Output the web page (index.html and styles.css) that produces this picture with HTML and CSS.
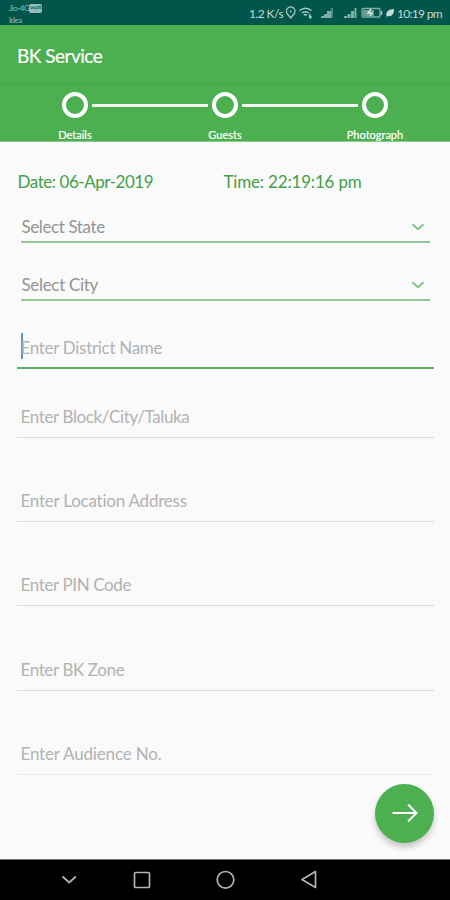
FILE: index.html
```html
<!DOCTYPE html>
<html lang="en">
<head>
<meta charset="utf-8">
<title>BK Service</title>
<link rel="stylesheet" href="styles.css">
</head>
<body>
<div class="screen">
  <header class="status">
    <div class="carriers">
      <div class="carrier"><span>Jio-4G</span><span class="volte">VoLTE</span></div>
      <div class="carrier">Idea</div>
    </div>
    <div class="indicators">
      <span class="speed">1.2 K/s</span>
      <svg class="glyphs" width="110" height="14" viewBox="0 0 110 14" fill="none" stroke="#a9cbc5" stroke-width="1.3">
        <path d="M5.700 12 2.400 8A4.300 4.300 0 1 1 9 8Z"/><circle cx="5.700" cy="5.400" r="1" fill="#a9cbc5" stroke="none"/>
        <path d="M14.500 4.500Q20.500-.2 26.500 4.500M17 7Q20.500 4.300 24 7M18.800 9.100Q20.500 8 22 9.100M20.500 11h.1M24.800 8v4.500M26.400 10.200l-1.600 2.300" stroke-width="1.500"/>
        <g fill="#81afa7" stroke="none">
          <path d="M36 10h3v2h-3zM39 8h3v4h-3zM42 5h4v7h-4z"/><path d="M46 2h2v10h-2z" opacity=".6"/>
          <path d="M59 10h3v2h-3zM62.500 8h3v4h-3zM66 5h3v7h-3zM69.500 2h2v10h-2z"/>
        </g>
        <rect x="77" y="2.500" width="18" height="8.500" rx="1" stroke="#81afa7"/><path d="M78 4h11v6H78z" fill="#6b9f96" stroke="none"/><path d="M96.500 5v4" stroke-width="1.500"/>
        <path d="m86 3-3 4h4l-2 3" stroke="#dce9e7"/>
        <path d="M101.500 10C100.500 5 104 3.500 109 3c0 5-2 8-6.500 7l-1.500 1.500" fill="#c3dad6" stroke="none"/>
      </svg>
      <span class="clock">10:19 pm</span>
    </div>
  </header>

  <div class="appbar"><h1>BK Service</h1></div>

  <nav class="steps">
    <div class="step"><div class="track"><i></i><b></b><i class="line"></i></div><span>Details</span></div>
    <div class="step"><div class="track"><i class="line"></i><b></b><i class="line"></i></div><span>Guests</span></div>
    <div class="step"><div class="track"><i class="line"></i><b></b><i></i></div><span>Photograph</span></div>
  </nav>

  <main class="form">
    <div class="stamp"><span class="date">Date: 06-Apr-2019</span><span class="time">Time: 22:19:16 pm</span></div>
    <div class="select"><span class="t-state">Select State</span><svg width="14" height="10" viewBox="0 0 14 10"><path d="m1.500 2.200 5.500 5 5.500-5"/></svg></div>
    <div class="select second"><span class="t-city">Select City</span><svg width="14" height="10" viewBox="0 0 14 10"><path d="m1.500 2.200 5.500 5 5.500-5"/></svg></div>
    <div class="field focused"><i class="caret"></i><span class="t-district">Enter District Name</span></div>
    <div class="field block"><span class="t-block">Enter Block/City/Taluka</span></div>
    <div class="field"><span class="t-location">Enter Location Address</span></div>
    <div class="field"><span class="t-pin">Enter PIN Code</span></div>
    <div class="field"><span class="t-zone">Enter BK Zone</span></div>
    <div class="field last"><span class="t-audience">Enter Audience No.</span></div>
    <button class="fab" aria-label="Next"><svg width="28" height="24" viewBox="0 0 28 24"><path d="M1.500 12h24M17 3.500l8.500 8.500-8.500 8.500"/></svg></button>
  </main>

  <footer class="navbar">
    <svg width="450" height="41" viewBox="0 0 450 41" fill="none" stroke="#b4b4b4" stroke-width="1.700">
      <path d="m62.500 17.500 6.700 6 6.700-6"/>
      <rect x="134.500" y="13.500" width="15" height="15" rx="1"/>
      <circle cx="225.500" cy="20.800" r="8.300"/>
      <path d="m302 20.500 13.500-8v16Z" stroke-linejoin="round"/>
    </svg>
  </footer>
</div>
</body>
</html>
```
FILE: styles.css
```css
* { box-sizing: border-box; }
body { margin: 0; font-family: Lato, sans-serif; background: #fafafa; }
.screen { width: 450px; height: 900px; display: flex; flex-direction: column; overflow: hidden; background: #fafafa; }
.status { height: 25px; flex: none; background: #00564a; display: flex; justify-content: space-between; padding: 2px 8px 0 9px; color: #a9cbc5; }
.carriers { font-size: 8px; line-height: 12px; letter-spacing: -.5px; color: #92bdb5; }
.carrier { display: flex; align-items: center; height: 12px; }
.volte { background: #92bdb5; color: #00564a; font-size: 4.500px; font-weight: 700; line-height: 8px; height: 9px; width: 13px; text-align: center; border-radius: 2px; letter-spacing: -.2px; }
.indicators { display: flex; height: 22px; align-items: center; font-size: 12px; color: #c3dad6; white-space: nowrap; }
.speed { width: 36px; letter-spacing: -.55px; }
.glyphs { flex: none; margin-right: 2px; }
.clock { width: 45px; letter-spacing: -.7px; }
.appbar { height: 58px; flex: none; background: #4caf50; padding: 18px 17px 0; }
h1 { margin: 0; font-size: 19px; line-height: 26px; font-weight: 400; color: #fff; letter-spacing: -.5px; -webkit-text-stroke: .2px #fff; }
.steps { height: 59px; flex: none; background: #4caf50; border-top: 1px solid #46a54b; border-bottom: 1px solid #8cca8f; display: flex; }
.step { flex: 1; display: flex; flex-direction: column; align-items: center; padding-top: 8px; font-size: 11px; line-height: 14px; color: #fff; }
.step span { margin-top: 10px; -webkit-text-stroke: .2px #fff; }
.track { display: flex; width: 100%; height: 26px; align-items: center; gap: 4px; }
.track b { width: 26px; height: 26px; border: 4px solid #fff; border-radius: 50%; flex: none; }
.track i { flex: 1; height: 3px; }
.track .line { background: #f2f9f2; }
.form { flex: 1; padding: 28px 16px 0 17px; font-size: 17px; line-height: 22px; display: flex; flex-direction: column; }
.form span { white-space: nowrap; }
.stamp { display: grid; grid-template-columns: 206px 1fr; height: 43px; padding: 1px 0 0 .5px; color: #43a047; }
.select { height: 30px; margin: 0 4px; border-bottom: 2px solid #91c995; display: flex; justify-content: space-between; padding: 3px 5px 0 .5px; color: #949494; }
.select svg { margin-top: 6px; fill: none; stroke: #83c487; stroke-width: 1.900; }
.second { margin-top: 28px; }
.field { height: 33px; margin-top: 51.200px; padding-top: 1px; border-bottom: 1px solid #dcdcdc; padding-left: 3.500px; color: #b2b2b2; flex: none; }
.focused { height: 34px; margin-top: 34px; padding-top: 2px; border-bottom: 2px solid #5bb55f; display: flex; }
.caret { width: 2px; height: 26px; background: #579bc3; margin: -4px -2px 0 0; flex: none; }
.block { height: 32px; margin-top: 37px; padding-top: 0; }
.last { border-color: #e9e9e9; }
.date { letter-spacing: -.45px; }
.time { letter-spacing: -.18px; }
.t-state { letter-spacing: -.4px; }
.t-city { letter-spacing: -.32px; }
.t-district { letter-spacing: -.3px; }
.t-block { letter-spacing: -.37px; }
.t-location { letter-spacing: -.23px; }
.t-pin { letter-spacing: -.37px; }
.t-zone { letter-spacing: -.38px; }
.t-audience { letter-spacing: -.17px; }
.fab { width: 59px; height: 59px; border: 0; border-radius: 50%; background: #4caf50; align-self: flex-end; margin-top: 9px; padding: 0; display: flex; align-items: center; justify-content: center; box-shadow: 0 4px 6px rgba(0,0,0,.22); flex: none; }
.fab svg { fill: none; stroke: #fff; stroke-width: 2; }
.navbar { height: 41px; flex: none; background: #000; border-top: 1px solid #777; }
.navbar svg { display: block; margin-top: -1px; }
```
